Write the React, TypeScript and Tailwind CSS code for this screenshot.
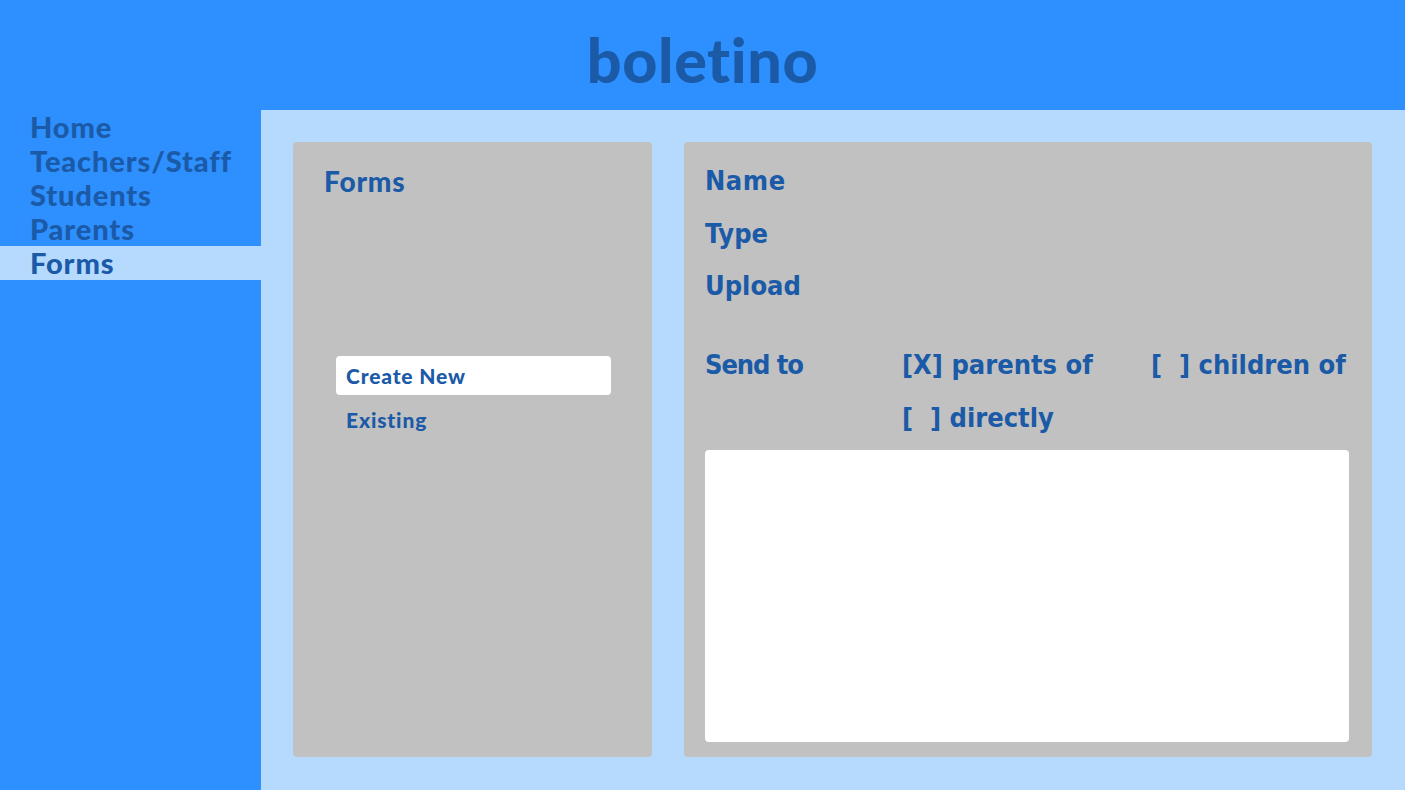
import React from "react";

const navItems = ["Home", "Teachers/Staff", "Students", "Parents", "Forms"];

export default function App() {
  const active = "Forms";

  return (
    <div className="h-[790px] w-full flex flex-col bg-[#2e8fff] text-[#1b5aa7]" style={{ fontFamily: "Lato, 'Noto Sans', sans-serif" }}>
      <header className="h-[110px] flex items-center justify-center">
        <h1 className="text-[61px] font-black leading-none tracking-[0.01em] pt-2">boletino</h1>
      </header>

      <div className="flex-1 flex">
        {/* Sidebar */}
        <aside className="w-[261px] flex flex-col">
          {navItems.map((item) => (
            <div
              key={item}
              className={`h-[34px] flex items-center pl-[30px] pb-[2px] text-[29px] font-black leading-none tracking-[0.03em] ${item === active ? "bg-[#b6d9fe]" : ""}`}
            >
              {item}
            </div>
          ))}
        </aside>

        {/* Main */}
        <main className="flex-1 bg-[#b6d9fe] pt-8 pl-8 pr-[33px] pb-[33px] flex gap-8">
          <section className="w-[359px] bg-[#c1c1c1] rounded-[4px] pl-[31px] pr-[41px] pt-[24px] flex flex-col">
            <h2 className="text-[28px] font-black leading-[30px] tracking-[0.03em]">Forms</h2>
            <div className="mt-[160px] flex flex-col gap-[8px]">
              <button className="h-[39px] bg-white rounded-[4px] ml-3 text-left pl-[10px] text-[21px] font-black tracking-[0.04em]">
                Create New
              </button>
              <button className="h-[34px] ml-3 text-left pl-[10px] text-[21px] font-black tracking-[0.04em]">Existing</button>
            </div>
          </section>

          <section
            className="flex-1 bg-[#c1c1c1] rounded-[4px] pl-[21px] pr-[23px] pt-[24px] pb-[15px] flex flex-col text-[27px] font-bold"
            style={{ fontFamily: "'DejaVu Sans Condensed', 'Liberation Sans Narrow', Lato, sans-serif" }}
          >
            <div className="h-[30px] flex items-center tracking-[0.02em]">Name</div>
            <div className="h-[30px] mt-[23px] flex items-center">Type</div>
            <div className="h-[30px] mt-[22px] flex items-center">Upload</div>

            <div className="mt-[49px] grid grid-cols-[197px_249px_1fr] gap-y-[23px]">
              <div className="h-[30px] flex items-center tracking-[-0.04em]">Send to</div>
              <div className="h-[30px] flex items-center whitespace-nowrap">[X] parents of</div>
              <div className="h-[30px] flex items-center whitespace-nowrap">[&nbsp;&nbsp;] children of</div>
              <div />
              <div className="h-[30px] flex items-center whitespace-nowrap">[&nbsp;&nbsp;] directly</div>
            </div>

            <textarea className="mt-[17px] flex-1 bg-white rounded-[4px] resize-none outline-none" />
          </section>
        </main>
      </div>
    </div>
  );
}
